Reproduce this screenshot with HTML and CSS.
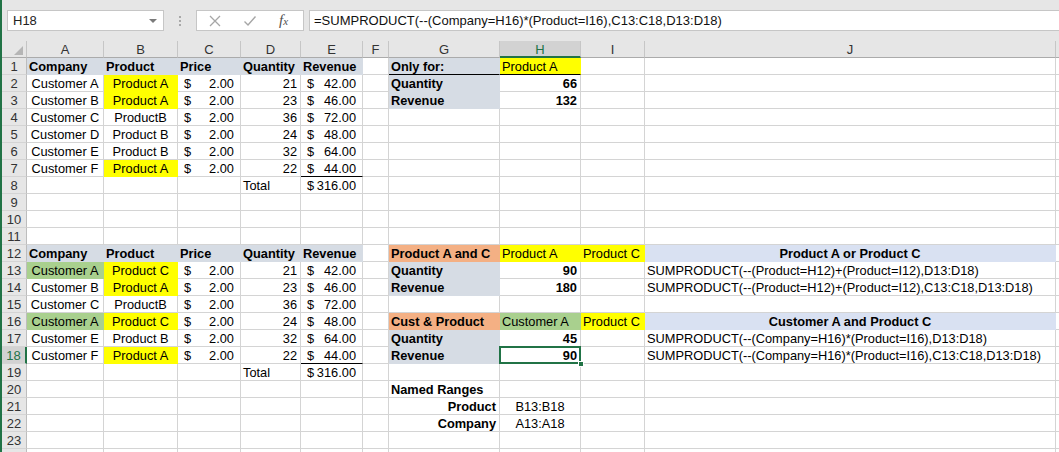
FILE: index.html
```html
<!DOCTYPE html>
<html>
<head>
<meta charset="utf-8">
<link rel="stylesheet" href="styles.css">
</head>
<body>
<div class="app">
  <div class="fbar">
    <div class="namebox">H18<span class="caret"></span></div>
    <div class="sep"><span></span><span></span><span></span></div>
    <div class="btns">
      <svg class="ico" width="14" height="14" viewBox="0 0 14 14"><path d="M2 2 L12 12 M12 2 L2 12" stroke="#a6a6a6" stroke-width="1.3" fill="none"/></svg>
      <svg class="ico" width="14" height="14" viewBox="0 0 14 14"><path d="M1.5 7.5 L5 11 L12.5 2.5" stroke="#a6a6a6" stroke-width="1.4" fill="none"/></svg>
      <span class="fx"><i>f</i><span class="fxx">x</span></span>
    </div>
    <div class="formula">=SUMPRODUCT(--(Company=H16)*(Product=I16),C13:C18,D13:D18)</div>
  </div>
  <div class="sheet">
    <div class="corner"><span class="tri"></span></div>
    <div class="ch">A</div><div class="ch">B</div><div class="ch">C</div><div class="ch">D</div><div class="ch">E</div><div class="ch">F</div><div class="ch">G</div><div class="ch csel">H</div><div class="ch">I</div><div class="ch">J</div><div class="ch"></div>

    <div class="rh">1</div>
    <div class="c hd">Company</div><div class="c hd">Product</div><div class="c hd">Price</div><div class="c hd">Quantity</div><div class="c hd">Revenue</div><div class="c"></div>
    <div class="c hd ub">Only for:</div><div class="c y ub">Product A</div><div class="c"></div><div class="c"></div><div class="c"></div>

    <div class="rh">2</div>
    <div class="c ctr">Customer A</div><div class="c ctr y">Product A</div><div class="c acc"><span>$</span><span>2.00</span></div><div class="c rt">21</div><div class="c acc"><span>$</span><span>42.00</span></div><div class="c"></div>
    <div class="c hd">Quantity</div><div class="c rt b">66</div><div class="c"></div><div class="c"></div><div class="c"></div>

    <div class="rh">3</div>
    <div class="c ctr">Customer B</div><div class="c ctr y">Product A</div><div class="c acc"><span>$</span><span>2.00</span></div><div class="c rt">23</div><div class="c acc"><span>$</span><span>46.00</span></div><div class="c"></div>
    <div class="c hd">Revenue</div><div class="c rt b">132</div><div class="c"></div><div class="c"></div><div class="c"></div>

    <div class="rh">4</div>
    <div class="c ctr">Customer C</div><div class="c ctr">ProductB</div><div class="c acc"><span>$</span><span>2.00</span></div><div class="c rt">36</div><div class="c acc"><span>$</span><span>72.00</span></div><div class="c"></div>
    <div class="c"></div><div class="c"></div><div class="c"></div><div class="c"></div><div class="c"></div>

    <div class="rh">5</div>
    <div class="c ctr">Customer D</div><div class="c ctr">Product B</div><div class="c acc"><span>$</span><span>2.00</span></div><div class="c rt">24</div><div class="c acc"><span>$</span><span>48.00</span></div><div class="c"></div>
    <div class="c"></div><div class="c"></div><div class="c"></div><div class="c"></div><div class="c"></div>

    <div class="rh">6</div>
    <div class="c ctr">Customer E</div><div class="c ctr">Product B</div><div class="c acc"><span>$</span><span>2.00</span></div><div class="c rt">32</div><div class="c acc"><span>$</span><span>64.00</span></div><div class="c"></div>
    <div class="c"></div><div class="c"></div><div class="c"></div><div class="c"></div><div class="c"></div>

    <div class="rh">7</div>
    <div class="c ctr">Customer F</div><div class="c ctr y">Product A</div><div class="c acc"><span>$</span><span>2.00</span></div><div class="c rt">22</div><div class="c acc ub"><span>$</span><span>44.00</span></div><div class="c"></div>
    <div class="c"></div><div class="c"></div><div class="c"></div><div class="c"></div><div class="c"></div>

    <div class="rh">8</div>
    <div class="c"></div><div class="c"></div><div class="c"></div><div class="c">Total</div><div class="c acc"><span>$</span><span>316.00</span></div><div class="c"></div>
    <div class="c"></div><div class="c"></div><div class="c"></div><div class="c"></div><div class="c"></div>

    <div class="rh">9</div>
    <div class="c"></div><div class="c"></div><div class="c"></div><div class="c"></div><div class="c"></div><div class="c"></div>
    <div class="c"></div><div class="c"></div><div class="c"></div><div class="c"></div><div class="c"></div>

    <div class="rh">10</div>
    <div class="c"></div><div class="c"></div><div class="c"></div><div class="c"></div><div class="c"></div><div class="c"></div>
    <div class="c"></div><div class="c"></div><div class="c"></div><div class="c"></div><div class="c"></div>

    <div class="rh">11</div>
    <div class="c"></div><div class="c"></div><div class="c"></div><div class="c"></div><div class="c"></div><div class="c"></div>
    <div class="c"></div><div class="c"></div><div class="c"></div><div class="c"></div><div class="c"></div>

    <div class="rh">12</div>
    <div class="c hd">Company</div><div class="c hd">Product</div><div class="c hd">Price</div><div class="c hd">Quantity</div><div class="c hd">Revenue</div><div class="c"></div>
    <div class="c o">Product A and C</div><div class="c y">Product A</div><div class="c y">Product C</div><div class="c bl">Product A or Product C</div><div class="c"></div>

    <div class="rh">13</div>
    <div class="c ctr g">Customer A</div><div class="c ctr y">Product C</div><div class="c acc"><span>$</span><span>2.00</span></div><div class="c rt">21</div><div class="c acc"><span>$</span><span>42.00</span></div><div class="c"></div>
    <div class="c hd">Quantity</div><div class="c rt b">90</div><div class="c"></div><div class="c">SUMPRODUCT(--(Product=H12)+(Product=I12),D13:D18)</div><div class="c"></div>

    <div class="rh">14</div>
    <div class="c ctr">Customer B</div><div class="c ctr y">Product A</div><div class="c acc"><span>$</span><span>2.00</span></div><div class="c rt">23</div><div class="c acc"><span>$</span><span>46.00</span></div><div class="c"></div>
    <div class="c hd">Revenue</div><div class="c rt b">180</div><div class="c"></div><div class="c">SUMPRODUCT(--(Product=H12)+(Product=I12),C13:C18,D13:D18)</div><div class="c"></div>

    <div class="rh">15</div>
    <div class="c ctr">Customer C</div><div class="c ctr">ProductB</div><div class="c acc"><span>$</span><span>2.00</span></div><div class="c rt">36</div><div class="c acc"><span>$</span><span>72.00</span></div><div class="c"></div>
    <div class="c"></div><div class="c"></div><div class="c"></div><div class="c"></div><div class="c"></div>

    <div class="rh">16</div>
    <div class="c ctr g">Customer A</div><div class="c ctr y">Product C</div><div class="c acc"><span>$</span><span>2.00</span></div><div class="c rt">24</div><div class="c acc"><span>$</span><span>48.00</span></div><div class="c"></div>
    <div class="c o">Cust &amp; Product</div><div class="c g">Customer A</div><div class="c y">Product C</div><div class="c bl">Customer A and Product C</div><div class="c"></div>

    <div class="rh">17</div>
    <div class="c ctr">Customer E</div><div class="c ctr">Product B</div><div class="c acc"><span>$</span><span>2.00</span></div><div class="c rt">32</div><div class="c acc"><span>$</span><span>64.00</span></div><div class="c"></div>
    <div class="c hd">Quantity</div><div class="c rt b">45</div><div class="c"></div><div class="c">SUMPRODUCT(--(Company=H16)*(Product=I16),D13:D18)</div><div class="c"></div>

    <div class="rh rsel">18</div>
    <div class="c ctr">Customer F</div><div class="c ctr y">Product A</div><div class="c acc"><span>$</span><span>2.00</span></div><div class="c rt">22</div><div class="c acc ub"><span>$</span><span>44.00</span></div><div class="c"></div>
    <div class="c hd">Revenue</div><div class="c rt b sel">90<span class="handle"></span></div><div class="c"></div><div class="c">SUMPRODUCT(--(Company=H16)*(Product=I16),C13:C18,D13:D18)</div><div class="c"></div>

    <div class="rh">19</div>
    <div class="c"></div><div class="c"></div><div class="c"></div><div class="c">Total</div><div class="c acc"><span>$</span><span>316.00</span></div><div class="c"></div>
    <div class="c"></div><div class="c"></div><div class="c"></div><div class="c"></div><div class="c"></div>

    <div class="rh">20</div>
    <div class="c"></div><div class="c"></div><div class="c"></div><div class="c"></div><div class="c"></div><div class="c"></div>
    <div class="c b">Named Ranges</div><div class="c"></div><div class="c"></div><div class="c"></div><div class="c"></div>

    <div class="rh">21</div>
    <div class="c"></div><div class="c"></div><div class="c"></div><div class="c"></div><div class="c"></div><div class="c"></div>
    <div class="c b rt">Product</div><div class="c ctr">B13:B18</div><div class="c"></div><div class="c"></div><div class="c"></div>

    <div class="rh">22</div>
    <div class="c"></div><div class="c"></div><div class="c"></div><div class="c"></div><div class="c"></div><div class="c"></div>
    <div class="c b rt">Company</div><div class="c ctr">A13:A18</div><div class="c"></div><div class="c"></div><div class="c"></div>

    <div class="rh">23</div>
    <div class="c"></div><div class="c"></div><div class="c"></div><div class="c"></div><div class="c"></div><div class="c"></div>
    <div class="c"></div><div class="c"></div><div class="c"></div><div class="c"></div><div class="c"></div>

    <div class="rh"></div>
    <div class="c"></div><div class="c"></div><div class="c"></div><div class="c"></div><div class="c"></div><div class="c"></div>
    <div class="c"></div><div class="c"></div><div class="c"></div><div class="c"></div><div class="c"></div>
  </div>
</div>
</body>
</html>
```

FILE: styles.css
```css
* { box-sizing: border-box; }
body { margin: 0; background: #fff; font-family: "Liberation Sans", Arial, sans-serif; }

.app {
  width: 1059px;
  height: 452px;
  overflow: hidden;
  border-left: 2px solid #217346;
  background: #fff;
}

.fbar {
  height: 41px;
  background: #e6e6e6;
  display: flex;
  align-items: flex-start;
  padding-top: 10px;
}
.namebox {
  position: relative;
  margin-left: 5px;
  width: 157px;
  height: 21px;
  background: #fff;
  border: 1px solid #c6c6c6;
  font-size: 13px;
  line-height: 19px;
  padding-left: 5px;
  color: #222;
}
.caret {
  position: absolute;
  right: 6px;
  top: 8px;
  width: 0;
  height: 0;
  border-left: 4px solid transparent;
  border-right: 4px solid transparent;
  border-top: 4px solid #7a7a7a;
}
.sep {
  width: 32px;
  height: 21px;
  display: flex;
  flex-direction: column;
  align-items: center;
  justify-content: center;
  gap: 2px;
}
.sep span { width: 2px; height: 2px; background: #a8a8a8; }
.btns {
  width: 108px;
  height: 21px;
  background: #fff;
  border: 1px solid #c6c6c6;
  display: flex;
  align-items: center;
  padding-left: 11px;
}
.ico { margin-right: 21px; }
.btns .ico + .ico { margin-right: 22px; }
.fx {
  font-family: "Liberation Serif", serif;
  font-size: 15px;
  color: #505050;
  line-height: 19px;
}
.fx i { font-style: italic; }
.fxx { font-style: italic; font-size: 11px; margin-left: 0; }
.formula {
  flex: 1;
  margin-left: 5px;
  height: 21px;
  background: #fff;
  border: 1px solid #c6c6c6;
  border-right: none;
  font-size: 13px;
  line-height: 19px;
  padding-left: 4px;
  color: #111;
  white-space: nowrap;
}

.sheet {
  display: grid;
  grid-template-columns: 25px 77px 74px 63px 60px 62px 26px 111px 81px 64px 411px 1fr;
  grid-auto-rows: 17px;
}

.corner {
  position: relative;
  background: #e6e6e6;
  border-right: 1px solid #c4c4c4;
  border-bottom: 1px solid #ababab;
}
.tri {
  position: absolute;
  right: 3px;
  bottom: 2px;
  width: 0;
  height: 0;
  border-left: 9px solid transparent;
  border-bottom: 9px solid #b5b5b5;
}
.ch {
  background: #e6e6e6;
  border-right: 1px solid #c6c6c6;
  border-bottom: 1px solid #ababab;
  text-align: center;
  font-size: 13px;
  line-height: 17px;
  color: #333;
}
.ch.csel {
  background: #d2d2d2;
  color: #217346;
  border-bottom: 2px solid #217346;
}
.rh {
  background: #e6e6e6;
  border-right: 1px solid #bdbdbd;
  border-bottom: 1px solid #d4d4d4;
  text-align: center;
  font-size: 13px;
  line-height: 17px;
  color: #333;
}
.rh.rsel {
  background: #d2d2d2;
  color: #217346;
  border-right: 2px solid #217346;
}

.c {
  border-right: 1px solid #d4d4d4;
  border-bottom: 1px solid #d4d4d4;
  padding: 0 2px;
  font-size: 12.8px;
  line-height: 17px;
  white-space: nowrap;
  color: #000;
}
.ctr { text-align: center; }
.rt { text-align: right; padding-right: 3px; }
.b { font-weight: 700; }
.acc {
  display: flex;
  justify-content: space-between;
  padding: 0 6px 0 6px;
}
.hd { background: #d6dce4; border-color: #d6dce4; font-weight: 700; }
.y { background: #ffff00; border-color: #ffff00; }
.g { background: #a9d08e; border-color: #a9d08e; }
.o { background: #f4b084; border-color: #f4b084; font-weight: 700; }
.bl { background: #d9e1f2; border-color: #d9e1f2; font-weight: 700; text-align: center; }
.ub { border-bottom: 1px solid #000; }

.sel { position: relative; }
.sel::after {
  content: "";
  position: absolute;
  left: -1px;
  top: -1px;
  right: -1px;
  bottom: -1px;
  border: 2px solid #217346;
}
.handle {
  position: absolute;
  right: -4px;
  bottom: -4px;
  width: 6px;
  height: 6px;
  background: #217346;
  border: 1px solid #fff;
  z-index: 2;
}
```
